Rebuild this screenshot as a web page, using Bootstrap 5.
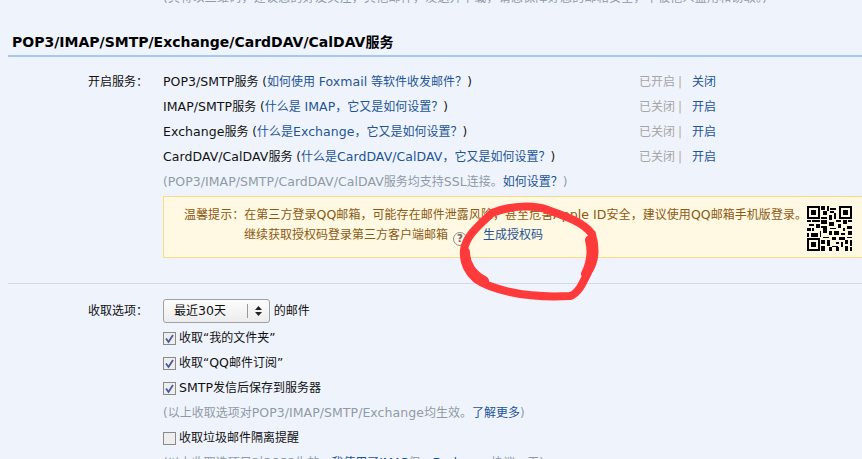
<!DOCTYPE html>
<html lang="zh">
<head>
<meta charset="utf-8">
<title>POP3/IMAP/SMTP 设置</title>
<link href="https://cdn.jsdelivr.net/npm/bootstrap@5.3.0/dist/css/bootstrap.min.css" rel="stylesheet">
<style>
html,body{height:459px;overflow:hidden}
body{background:#eff4fc;color:#111;font-family:"DejaVu Sans","Noto Sans CJK SC",sans-serif;font-size:12px;line-height:25px;position:relative}
a{color:#1e5494;text-decoration:none}
.la{font-size:12.5px;letter-spacing:.05px;line-height:1}
.clip-line{margin:-14px 0 0 163px;color:#8f9aa6;white-space:nowrap;height:25px;letter-spacing:.25px}
.sec-title{margin:18px 0 0 8px;padding:0 0 0 4px;height:28px;border-bottom:2px solid #a9c8ee;font-size:14px;font-weight:700;line-height:26px;color:#000}
.form-line{display:flex}
.svc-top{margin-top:13px}
.lbl{width:148px;flex:none;text-align:right;margin-right:15px;white-space:nowrap}
.body-col{flex:1;min-width:0}
.svc{display:flex;white-space:nowrap}
.svc-name{width:476px;flex:none}
.st{color:#a5a5a5}
.sep{color:#b9ad9a;margin:0 10px 0 3px}
.hint{color:#8f9aa6;white-space:nowrap}
.tipbox{margin-top:1px;height:62px;background:#fff8e2;border:1px solid #fbdc85;border-right:0;color:#8a5a12;white-space:nowrap;line-height:20px;padding:8px 0 0 20px;display:flex;justify-content:space-between;width:699px}
.tip1{letter-spacing:.05px}
.tip2{margin-left:60px}
.qm{display:inline-block;width:14px;height:14px;border:1.5px solid #8c8c8c;border-radius:50%;color:#666;font-size:10px;font-weight:700;line-height:11px;text-align:center;margin:0 16px 0 5px;vertical-align:-3px}
.qr{width:45px;height:45px;flex:none;margin:1px 10px 0 0}
.rule{margin:25px 0 0 8px;height:1px;background:#d3dae3}
.opts{margin-top:15px}
.sel-box{display:inline-flex;align-items:center;width:107px;height:24px;border:1px solid #a0a0a0;border-radius:3px;background:linear-gradient(#fdfdfd,#ececec);padding-left:10px;line-height:22px;vertical-align:top;color:#111}
.sel-txt{flex:1}
.sel-arrow{width:22px;height:14px;border-left:1px solid #999;flex:none;display:flex;justify-content:center;align-items:center}
.opt-row{display:flex;align-items:center;height:25px;white-space:nowrap}
.cb{width:13px;height:13px;flex:none;margin-right:3px;display:block}
.first-opt{margin-top:2px}
.scribble{position:absolute;left:0;top:0;width:862px;height:459px;pointer-events:none}
</style>
</head>
<body>
<div class="clip-line">(其将以二维码，建议您的好友关注，其他邮件，发送并下载，请您保障好您的邮箱安全，不被他人盗用和窃取。)</div>
<div class="sec-title">POP3/IMAP/SMTP/Exchange/CardDAV/CalDAV服务</div>
<div class="form-line svc-top">
  <div class="lbl">开启服务：</div>
  <div class="body-col">
    <div class="svc"><div class="svc-name"><span class="la">POP3/SMTP</span>服务 (<a href="#">如何使用 <span class="la">Foxmail</span> 等软件收发邮件？</a>)</div><span class="st">已开启</span><span class="sep">|</span><a href="#">关闭</a></div>
    <div class="svc"><div class="svc-name"><span class="la">IMAP/SMTP</span>服务 (<a href="#">什么是 <span class="la">IMAP</span>，它又是如何设置？</a>)</div><span class="st">已关闭</span><span class="sep">|</span><a href="#">开启</a></div>
    <div class="svc"><div class="svc-name"><span class="la">Exchange</span>服务 (<a href="#">什么是<span class="la">Exchange</span>，它又是如何设置？</a>)</div><span class="st">已关闭</span><span class="sep">|</span><a href="#">开启</a></div>
    <div class="svc"><div class="svc-name"><span class="la">CardDAV/CalDAV</span>服务 (<a href="#">什么是<span class="la">CardDAV/CalDAV</span>，它又是如何设置？</a>)</div><span class="st">已关闭</span><span class="sep">|</span><a href="#">开启</a></div>
    <div class="hint">(<span class="la">POP3/IMAP/SMTP/CardDAV/CalDAV</span>服务均支持<span class="la">SSL</span>连接。<a href="#">如何设置？</a>)</div>
    <div class="tipbox">
      <div>
        <div class="tip1">温馨提示：在第三方登录<span class="la">QQ</span>邮箱，可能存在邮件泄露风险，甚至危害<span class="la">Apple ID</span>安全，建议使用<span class="la">QQ</span>邮箱手机版登录。</div>
        <div class="tip2">继续获取授权码登录第三方客户端邮箱<span class="qm">?</span><a href="#">生成授权码</a></div>
      </div>
      <svg class="qr" viewBox="0 0 25 25" shape-rendering="crispEdges"><path fill="#000" fill-rule="evenodd" d="M0 0h7v7H0zM1 1v5h5V1zM2 2h3v3H2zM18 0h7v7h-7zM19 1v5h5V1zM20 2h3v3h-3zM0 18h7v7H0zM1 19v5h5v-5zM2 20h3v3H2zM8 0h2v2H8zM11 0h1v3h-1zM13 1h3v1h-3zM9 3h2v2H9zM13 3h2v1h-2zM15 4h1v3h-1zM8 6h3v1H8zM12 5h2v3h-2zM0 8h2v1H0zM3 8h4v1H3zM8 8h3v2H8zM16 8h3v1h-3zM20 8h2v2h-2zM23 8h2v1h-2zM1 10h3v1H1zM5 10h2v2H5zM12 9h3v2h-3zM17 10h2v2h-2zM22 11h3v2h-3zM0 12h2v2H0zM3 12h1v2H3zM8 11h3v1H8zM9 12h2v3H9zM13 12h3v1h-3zM20 12h1v2h-1zM2 15h4v2H2zM0 15h1v2H0zM7 14h1v3H7zM12 14h2v2h-2zM15 14h3v2h-3zM19 15h2v1h-2zM23 14h2v2h-2zM9 17h3v1H9zM14 17h2v2h-2zM18 17h3v2h-3zM22 17h3v1h-3zM8 19h2v2H8zM11 19h2v3h-2zM16 20h2v1h-2zM19 20h1v3h-1zM21 19h2v2h-2zM24 19h1v3h-1zM8 22h2v3H8zM14 22h3v1h-3zM16 23h2v2h-2zM21 22h2v3h-2zM12 23h2v2h-2zM24 23h1v2h-1z"/></svg>
    </div>
  </div>
</div>
<div class="rule"></div>
<div class="form-line opts">
  <div class="lbl">收取选项：</div>
  <div class="body-col">
    <div><span class="sel-box"><span class="sel-txt">最近<span class="la">30</span>天</span><span class="sel-arrow"><svg width="7" height="10" viewBox="0 0 7 10"><path fill="#222" d="M3.500 0 7 4H0zM0 6h7l-3.500 4z"/></svg></span></span> 的邮件</div>
    <div class="opt-row first-opt"><svg class="cb" viewBox="0 0 13 13"><rect x=".5" y=".5" width="12" height="12" fill="#eee" stroke="#8a8a8a"/><path d="M3 6.500 5.500 10 10 3" fill="none" stroke="#4a5a9a" stroke-width="1.800"/></svg>收取“我的文件夹”</div>
    <div class="opt-row"><svg class="cb" viewBox="0 0 13 13"><rect x=".5" y=".5" width="12" height="12" fill="#eee" stroke="#8a8a8a"/><path d="M3 6.500 5.500 10 10 3" fill="none" stroke="#4a5a9a" stroke-width="1.800"/></svg>收取“<span class="la">QQ</span>邮件订阅”</div>
    <div class="opt-row"><svg class="cb" viewBox="0 0 13 13"><rect x=".5" y=".5" width="12" height="12" fill="#eee" stroke="#8a8a8a"/><path d="M3 6.500 5.500 10 10 3" fill="none" stroke="#4a5a9a" stroke-width="1.800"/></svg><span class="la">SMTP</span>发信后保存到服务器</div>
    <div class="hint">(以上收取选项对<span class="la">POP3/IMAP/SMTP/Exchange</span>均生效。<a href="#">了解更多</a>)</div>
    <div class="opt-row"><svg class="cb" viewBox="0 0 13 13"><rect x=".5" y=".5" width="12" height="12" fill="#eee" stroke="#8a8a8a"/></svg>收取垃圾邮件隔离提醒</div>
    <div class="hint">(以上收取选项只对POP3生效，<a href="#">我使用了IMAP</a>但，<a href="#">Exchange</a>协议，无)</div>
  </div>
</div>
<svg class="scribble" viewBox="0 0 862 459"><path d="M492 213C512 205 535 205 548 210 565 216 583 222 592 234 596 248 595 262 588 272 583 283 578 294 570 296 550 297 528 296 510 292 497 289 484 285 476 279 468 272 463 262 464 250 466 236 478 226 492 213" fill="none" stroke="#ff3a3a" stroke-width="8" stroke-linecap="round" stroke-linejoin="round"/><path d="M465 252C465 264 472 275 484 281M590 240C593 252 591 264 586 274" fill="none" stroke="#ff3a3a" stroke-width="10" stroke-linecap="round"/></svg>
<script src="https://cdn.jsdelivr.net/npm/bootstrap@5.3.0/dist/js/bootstrap.bundle.min.js"></script>
</body>
</html>
